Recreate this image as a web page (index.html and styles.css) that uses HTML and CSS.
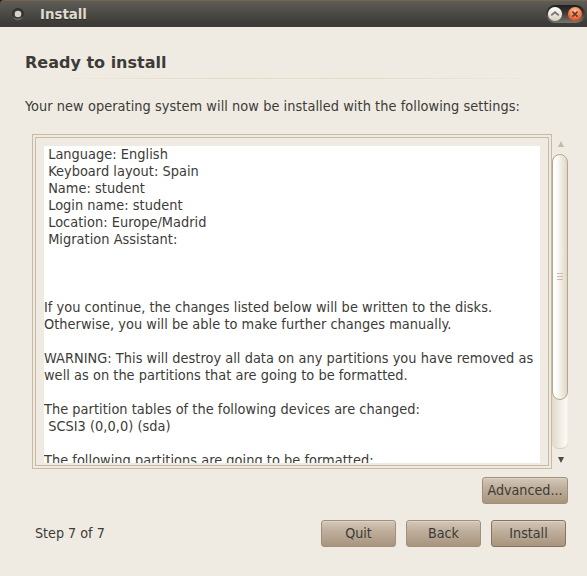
FILE: index.html
```html
<!DOCTYPE html>
<html lang="en">
<head>
<meta charset="utf-8">
<title>Install</title>
<link rel="stylesheet" href="styles.css">
</head>
<body>
<div class="window">
  <header class="titlebar">
    <svg class="menu-dot" width="14" height="14" viewBox="0 0 14 14">
      <defs><linearGradient id="ring" x1="0" y1="0" x2="0" y2="1"><stop offset="0" stop-color="#292925"/><stop offset=".65" stop-color="#373732"/><stop offset="1" stop-color="#8a8880"/></linearGradient></defs>
      <circle cx="7" cy="7" r="6" fill="url(#ring)"/><circle cx="7" cy="6.6" r="5.2" fill="#363631"/><circle cx="7" cy="7" r="3.3" fill="#d6d2c8"/>
    </svg>
    <span class="title">Install</span>
    <div class="controls">
      <svg width="40" height="18" viewBox="0 0 40 18">
        <defs>
          <linearGradient id="tray" x1="0" y1="0" x2="0" y2="1"><stop offset="0" stop-color="#1e1d1a"/><stop offset=".4" stop-color="#383733"/><stop offset="1" stop-color="#777670"/></linearGradient>
          <linearGradient id="white" x1="0" y1="0" x2="0" y2="1"><stop offset="0" stop-color="#fff"/><stop offset="1" stop-color="#d8cdbd"/></linearGradient>
          <radialGradient id="orange" cx=".5" cy=".3" r=".7"><stop offset="0" stop-color="#ffc2a0"/><stop offset=".5" stop-color="#f5895c"/><stop offset="1" stop-color="#d9481a"/></radialGradient>
        </defs>
        <rect x="0" y="0" width="39" height="18" rx="9" fill="url(#tray)"/>
        <circle cx="9" cy="9" r="7.1" fill="url(#white)"/>
        <path d="M5.2 10.4 9 7.2l3.8 3.2" fill="none" stroke="#77736c" stroke-width="1.8"/>
        <circle cx="29" cy="9" r="7.1" fill="url(#orange)"/>
        <path d="m26.4 6.6 5.2 5m0-5-5.2 5" fill="none" stroke="#653c2d" stroke-width="1.7"/>
      </svg>
    </div>
  </header>
  <main class="content">
    <h1 class="heading">Ready to install</h1>
    <div class="divider"></div>
    <p class="intro">Your new operating system will now be installed with the following settings:</p>
    <div class="scroller">
      <div class="frame"><div class="frame-inner">
        <pre class="summary"> Language: English
 Keyboard layout: Spain
 Name: student
 Login name: student
 Location: Europe/Madrid
 Migration Assistant:



If you continue, the changes listed below will be written to the disks.
Otherwise, you will be able to make further changes manually.

WARNING: This will destroy all data on any partitions you have removed as
well as on the partitions that are going to be formatted.

The partition tables of the following devices are changed:
 SCSI3 (0,0,0) (sda)

The following partitions are going to be formatted:</pre>
      </div></div>
      <div class="scrollbar">
        <svg class="arrow" width="6" height="6" viewBox="0 0 6 6"><path d="M3 0 6 6H0z" fill="#c5b9a6"/></svg>
        <div class="track"><div class="thumb"><i></i><i></i><i></i></div></div>
        <svg class="arrow" width="6" height="6" viewBox="0 0 6 6"><path d="M0 0h6L3 6z" fill="#4c4a45"/></svg>
      </div>
    </div>
    <div class="advanced"><button class="btn wide">Advanced...</button></div>
    <footer class="footer">
      <span class="step">Step 7 of 7</span>
      <button class="btn">Quit</button>
      <button class="btn">Back</button>
      <button class="btn default">Install</button>
    </footer>
  </main>
</div>
</body>
</html>
```
FILE: styles.css
```css
* { box-sizing: border-box; }
body { margin: 0; background: #efebe3; color: #3c3b37; font: 14.2px/17px "DejaVu Sans Condensed", "DejaVu Sans", sans-serif; overflow: hidden; }
.window { width: 587px; height: 576px; display: flex; flex-direction: column; background: linear-gradient(135deg, #2c0f24 3px, transparent 3px); }
.titlebar { height: 27px; flex: none; display: flex; align-items: center; padding: 0 1px 0 11px; background: linear-gradient(#5f5d56, #3c3b37 85%); border-top: 1px solid #736653; border-top-left-radius: 4px; }
.menu-dot { flex: none; }
.title { margin-left: 15px; flex: 1; padding-top: 1px; font: bold 13.33px/18px "DejaVu Sans", sans-serif; color: #dfdbd2; text-shadow: 0 1px #2b2a26; }
.controls { height: 18px; flex: none; }
.controls svg { display: block; }
.content { padding: 26px 19px 0 25px; }
.heading { margin: 0; font: bold 16px/20px "DejaVu Sans", sans-serif; }
.divider { height: 2px; margin-top: 5px; background: linear-gradient(90deg, transparent, #e1dac7 35%, #e1dac7 65%, transparent) top / 100% 1px no-repeat, linear-gradient(90deg, transparent, #f4efe3 50%, transparent); }
.intro { margin: 18px 0 0; white-space: nowrap; font-size: 14.4px; letter-spacing: .055px; }
.scroller { display: flex; margin: 19px 0 0 7px; height: 335px; }
.frame { width: 520px; flex: none; border: 1px solid #c9baa3; padding: 2px; }
.frame-inner { height: 100%; border: 1px solid #c9baa3; padding: 8px; }
.summary { margin: 0; width: 496px; height: 317px; overflow: hidden; background: #fff; font: inherit; font-size: 14.4px; letter-spacing: .035px; white-space: pre; }
.scrollbar { width: 17px; display: flex; flex-direction: column; align-items: center; padding: 7px 0 6px; }
.arrow { flex: none; display: block; }
.track { width: 16px; height: 295px; flex: none; margin: 7px 1px 8px 0; border-radius: 7px; background: linear-gradient(90deg, #e0d8ca, #fbf9f5 85%, #f4f0e9); border-bottom: 1px solid #d8ceba; }
.thumb { height: 246px; border: 1px solid #b5a78e; border-radius: 8px; background: linear-gradient(90deg, #fff 20%, #f2eee6 55%, #dfd6c8); display: flex; flex-direction: column; align-items: center; justify-content: center; gap: 2px; padding-bottom: 2px; }
.thumb i { width: 6px; height: 1px; background: #cabeab; }
.advanced { display: flex; justify-content: flex-end; margin-top: 8px; }
.btn { width: 75px; height: 27px; padding: 0 0 1px; font: inherit; color: inherit; border: 1px solid #a19078; border-radius: 3px; background: linear-gradient(#d3c8bb, #bfae9b 40%, #a7957e); box-shadow: inset 0 1px #ddd3c5; }
.btn.wide { width: 86px; }
.btn.default { border-color: #85755f; }
.footer { display: flex; gap: 10px; align-items: center; margin: 16px 2px 0 10px; }
.step { flex: 1; }
```
